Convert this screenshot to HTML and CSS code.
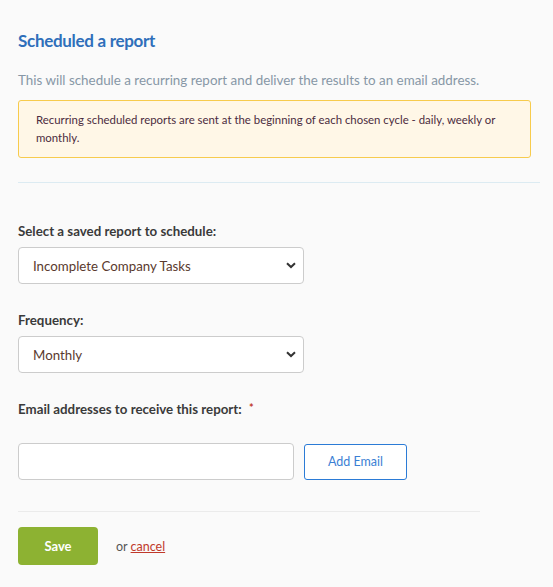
FILE: index.html
```html
<!DOCTYPE html>
<html lang="en">
<head>
    <meta charset="UTF-8">
    <meta name="viewport" content="width=device-width, initial-scale=1.0">
    <title>Schedule a report</title>
    <link rel="stylesheet" href="styles.css">
</head>
<body>
    <div class="page">
        <h2 class="title">Scheduled a report</h2>
        <p class="intro">This will schedule a recurring report and deliver the results to an email address.</p>
        <div class="notice">
            Recurring scheduled reports are sent at the beginning of each chosen cycle - daily, weekly or monthly.
        </div>
        <hr class="rule">

        <form class="form">
            <div class="field">
                <label class="label" for="report">Select a saved report to schedule:</label>
                <div class="select-wrap">
                    <select id="report" class="select">
                        <option>Incomplete Company Tasks</option>
                    </select>
                    <svg class="chevron" width="10" height="7" viewBox="0 0 10 7"><path d="M1 1.2 L5 5 L9 1.2" fill="none" stroke="#333" stroke-width="2"/></svg>
                </div>
            </div>

            <div class="field">
                <label class="label" for="frequency">Frequency:</label>
                <div class="select-wrap">
                    <select id="frequency" class="select">
                        <option>Monthly</option>
                    </select>
                    <svg class="chevron" width="10" height="7" viewBox="0 0 10 7"><path d="M1 1.2 L5 5 L9 1.2" fill="none" stroke="#333" stroke-width="2"/></svg>
                </div>
            </div>

            <div class="field">
                <label class="label">Email addresses to receive this report: <span class="req">*</span></label>
                <div class="email-row">
                    <input type="text" class="input">
                    <button type="button" class="btn-outline">Add Email</button>
                </div>
            </div>

            <div class="actions">
                <button type="button" class="btn-save">Save</button>
                <span class="or">or <a href="#" class="cancel">cancel</a></span>
            </div>
        </form>
    </div>
</body>
</html>
```

FILE: styles.css
```css
body {
    margin: 0;
    background-color: #fafafa;
    font-family: Lato, "Open Sans", sans-serif;
    color: #333;
}

.page {
    padding: 28px 13px 0 18px;
}

.title {
    margin: 0;
    font-size: 17px;
    font-weight: 700;
    letter-spacing: -0.3px;
    color: #2f6fba;
    line-height: 26px;
}

.intro {
    margin: 16px 0 10px;
    font-size: 13.4px;
    color: #8797a6;
    line-height: 20px;
}

.notice {
    margin-right: 9px;
    background-color: #fff7e7;
    border: 1px solid #f7cb4d;
    border-radius: 3px;
    padding: 10px 17px;
    font-size: 11.4px;
    line-height: 18px;
    color: #4b2c40;
}

.rule {
    border: none;
    border-top: 1px solid #dcebf2;
    margin: 24px 0 0;
}

.form {
    padding-top: 40px;
}

.field {
    margin-bottom: 28px;
}

.label {
    display: block;
    font-size: 13.3px;
    font-weight: 700;
    color: #3a3a3a;
    margin-bottom: 8px;
}

.req {
    color: #c0392b;
    margin-left: 4px;
    font-size: 11px;
    vertical-align: top;
}

.select-wrap {
    position: relative;
    width: 286px;
}

.select {
    appearance: none;
    -webkit-appearance: none;
    width: 100%;
    height: 37px;
    border: 1px solid #ccc;
    border-radius: 4px;
    background: #fff;
    padding: 0 14px;
    font-family: inherit;
    font-size: 13.3px;
    color: #5a3a2e;
}

.chevron {
    position: absolute;
    right: 8px;
    top: 15px;
    pointer-events: none;
}

.email-row {
    display: flex;
    align-items: center;
    gap: 10px;
    margin-top: 26px;
}

.input {
    width: 276px;
    height: 37px;
    box-sizing: border-box;
    border: 1px solid #ccc;
    border-radius: 4px;
    background: #fff;
}

.btn-outline {
    width: 103px;
    height: 36px;
    border: 1px solid #2b7bd6;
    border-radius: 3px;
    background: #fff;
    color: #3b7fd4;
    font-family: inherit;
    font-size: 12.5px;
}

.actions {
    border-top: 1px solid #ebebeb;
    margin-top: 31px;
    margin-right: 60px;
    padding-top: 15px;
    display: flex;
    align-items: center;
}

.field + .actions {
    margin-top: 31px;
}

.btn-save {
    width: 80px;
    height: 38px;
    border: none;
    border-radius: 4px;
    background-color: #8db232;
    color: #fff;
    font-family: inherit;
    font-size: 13px;
    font-weight: 700;
}

.or {
    margin-left: 18px;
    font-size: 12.5px;
    color: #555;
}

.cancel {
    color: #c0392b;
}
```
